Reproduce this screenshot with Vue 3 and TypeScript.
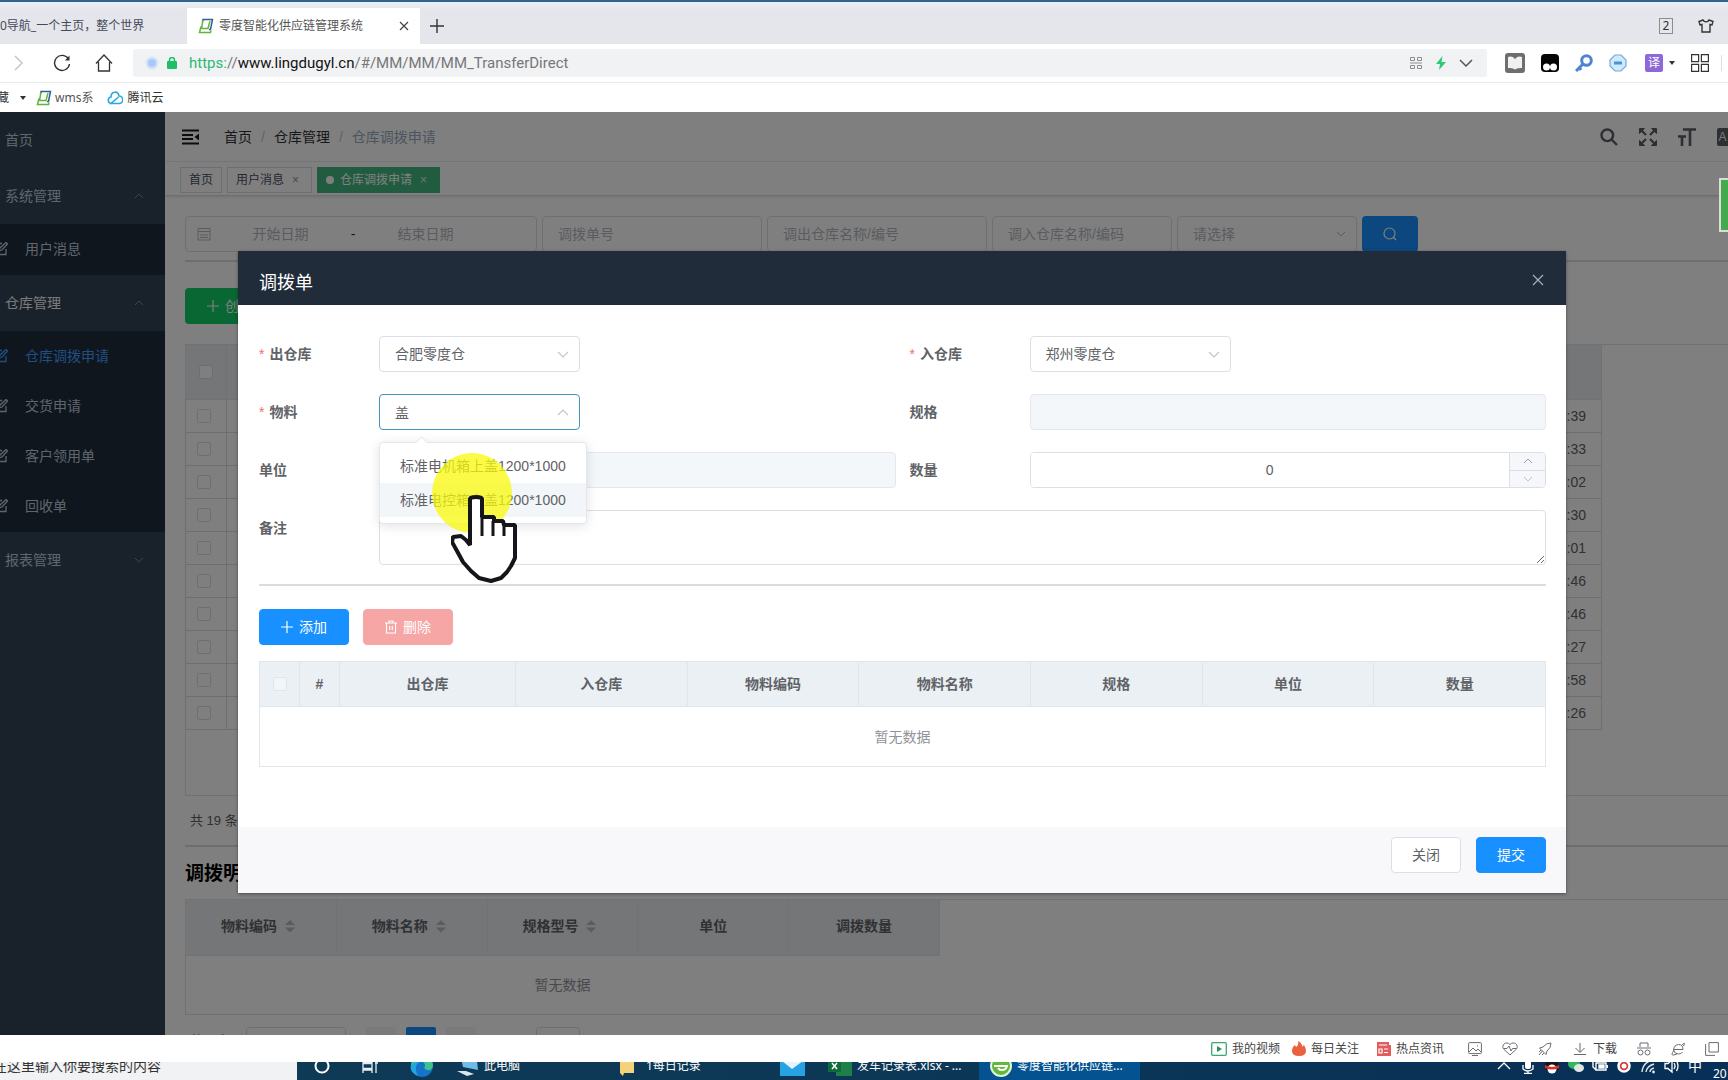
<script setup lang="ts">
import { ref } from 'vue'

interface MenuGroup {
  title: string
  open: boolean
  bright?: boolean
  children: string[]
}

const menu: MenuGroup[] = [
  { title: '系统管理', open: true, children: ['用户消息'] },
  { title: '仓库管理', open: true, bright: true, children: ['仓库调拨申请', '交货申请', '客户领用单', '回收单'] },
  { title: '报表管理', open: false, children: [] },
]
const current = '仓库调拨申请'
const times = [':39', ':33', ':02', ':30', ':01', ':46', ':46', ':27', ':58', ':26']
const detailColumns = [
  { name: '物料编码', sortable: true },
  { name: '物料名称', sortable: true },
  { name: '规格型号', sortable: true },
  { name: '单位', sortable: false },
  { name: '调拨数量', sortable: false },
]
const itemColumns = ['出仓库', '入仓库', '物料编码', '物料名称', '规格', '单位', '数量']
const materials = ['标准电机箱上盖1200*1000', '标准电控箱上盖1200*1000']
const hovered = 1

const material = ref('盖')
const quantity = ref('0')
const remark = ref('')
</script>

<template>
  <div class="screen">
    <header class="browser">
      <div class="tabstrip">
        <a class="tab" href="#">0导航_一个主页，整个世界</a>
        <div class="tab on">
          <svg class="logo" viewBox="0 0 16 16"><path d="M4.500 3.500L5 1.500h9.500l-2 10H11" fill="none" stroke="#2d5f9a" stroke-width="1.500"/><path d="M5 2L3.500 10.500h6.500L12 3M3 8.500L1.500 14.500h11l.500-2" fill="none" stroke="#62b53c" stroke-width="1.500"/></svg>
          <span class="tab-name">零度智能化供应链管理系统</span>
          <button class="plain" aria-label="关闭标签"><svg width="10" height="10" viewBox="0 0 10 10"><path d="M1 1l8 8M9 1L1 9" stroke="#444" stroke-width="1.200"/></svg></button>
        </div>
        <button class="plain plus" aria-label="新标签"><svg width="14" height="14" viewBox="0 0 14 14"><path d="M7 0v14M0 7h14" stroke="#333" stroke-width="1.400"/></svg></button>
        <span class="count">2</span>
        <svg class="shirt" viewBox="0 0 16 14"><path d="M5 1L1 2.500 2 6l2-.500V13h8V5.500l2 .500 1-3.500L11 1C10 3.500 6 3.500 5 1z" fill="none" stroke="#333" stroke-width="1.400"/></svg>
      </div>

      <div class="toolbar">
        <button class="plain" aria-label="前进"><svg width="10" height="16" viewBox="0 0 10 16"><path d="M1 1l7 7-7 7" fill="none" stroke="#c4c6ca" stroke-width="1.500"/></svg></button>
        <button class="plain reload" aria-label="刷新"><svg width="18" height="18" viewBox="0 0 18 18"><path d="M15.500 5A7.500 7.500 0 1 0 16.500 10" fill="none" stroke="#333" stroke-width="1.400"/><path d="M16.500 1.500v5H12z" fill="#333"/></svg></button>
        <button class="plain home" aria-label="主页"><svg width="18" height="18" viewBox="0 0 18 18"><path d="M1 9.500L9 1l8 8.500M3.500 8v9h11V8" fill="none" stroke="#333" stroke-width="1.300"/></svg></button>
        <div class="address">
          <svg width="14" height="14" viewBox="0 0 14 14"><circle cx="7" cy="7" r="6.500" fill="#d5e3f8"/><circle cx="7" cy="7" r="4" fill="#a9c8f5"/></svg>
          <svg class="lock" width="10" height="12" viewBox="0 0 10 12"><rect y="4" width="10" height="8" rx="1" fill="#1fbf65"/><path d="M2.500 5V3a2.500 2.500 0 0 1 5 0v2" fill="none" stroke="#1fbf65" stroke-width="1.500"/></svg>
          <span class="url"><i>https:</i>//<b>www.lingdugyl.cn</b>/#/MM/MM/MM_TransferDirect</span>
          <svg width="12" height="12" viewBox="0 0 12 12" fill="none" stroke="#8b8e93"><path d="M.500.500h4v3h-4zM7.500.500h4v3h-4zM.500 8.500h4v3h-4zM7.500 8.500h4v3h-4zM0 6h12"/></svg>
          <svg class="bolt" width="10" height="14" viewBox="0 0 10 14"><path d="M6.500 0L0 8h4l-1 6 7-8H5.500z" fill="#2fc878"/></svg>
          <svg width="14" height="8" viewBox="0 0 14 8"><path d="M1 1l6 6 6-6" fill="none" stroke="#555" stroke-width="1.500"/></svg>
        </div>
        <div class="exts">
          <svg width="20" height="20" viewBox="0 0 20 20"><rect width="20" height="20" rx="3" fill="#6d6e70"/><path d="M3 4q4-1.500 7 2 3-3.500 7-2v11q-5-.500-7 1.500-2-2-7-1.500z" fill="#f1f1f1"/></svg>
          <svg width="18" height="18" viewBox="0 0 18 18"><rect width="18" height="18" rx="4" fill="#050505"/><circle cx="5.500" cy="13" r="3.500" fill="#fff"/><circle cx="12.500" cy="13" r="3.500" fill="#fff"/></svg>
          <svg width="18" height="18" viewBox="0 0 18 18" fill="none" stroke="#5084d0" stroke-width="3"><circle cx="11.500" cy="6.500" r="4.800"/><path d="M8 10l-7 7M4 13l2 3"/></svg>
          <svg width="18" height="18" viewBox="0 0 18 18"><path d="M6 1h6l5 5v6l-5 5H6l-5-5V6z" fill="#cfeaff" stroke="#74a9d8" stroke-width="1.200"/><path d="M5 9h8" stroke="#4b93d4" stroke-width="3"/></svg>
          <span class="translate">译</span>
          <span class="caret"></span>
          <svg width="18" height="18" viewBox="0 0 18 18" fill="none" stroke="#333" stroke-width="1.200"><path d="M.600.600h7v7h-7zM10.400.600h7v7h-7zM.600 10.400h7v7h-7zM10.400 10.400h7v7h-7z"/></svg>
          <span class="sep"></span>
        </div>
      </div>

      <nav class="bookmarks">
        <a class="fav" href="#">藏</a>
        <span class="caret"></span>
        <svg class="logo" viewBox="0 0 16 16"><path d="M4.500 3.500L5 1.500h9.500l-2 10H11" fill="none" stroke="#2d5f9a" stroke-width="1.500"/><path d="M5 2L3.500 10.500h6.500L12 3M3 8.500L1.500 14.500h11l.500-2" fill="none" stroke="#62b53c" stroke-width="1.500"/></svg>
        <a class="wms" href="#">wms系</a>
        <svg class="cloud" width="16" height="14" viewBox="0 0 16 14" fill="none" stroke="#29a9e1" stroke-width="1.600"><path d="M4 12.500a3.300 3.300 0 0 1 0-6.500C4 0 11.500-.500 12 5a3.700 3.700 0 0 1 0 7.500H4L11.500 6"/></svg>
        <a href="#">腾讯云</a>
      </nav>
    </header>

    <div class="page">
      <aside class="side">
        <a class="menu-top" href="#">首页</a>
        <template v-for="g in menu" :key="g.title">
          <a class="menu-top" :class="{ bright: g.bright }" href="#">
            <span>{{ g.title }}</span>
            <svg width="10" height="6" viewBox="0 0 10 6"><path :d="g.open ? 'M1 5l4-4 4 4' : 'M1 1l4 4 4-4'" fill="none" stroke="#808a96"/></svg>
          </a>
          <div v-if="g.children.length" class="submenu">
            <a v-for="c in g.children" :key="c" class="menu-sub" :class="{ active: c === current }" href="#">
              <svg width="14" height="14" viewBox="0 0 14 14" fill="none" stroke="currentColor" stroke-width="1.300"><path d="M8 1.500H1v11h11V7M5 9l1-3 6-5.500L13.500 2 8 8z"/></svg>
              <span>{{ c }}</span>
            </a>
          </div>
        </template>
      </aside>

      <main class="main">
        <div class="navbar">
          <svg width="17" height="16" viewBox="0 0 17 16"><path d="M0 1.500h17M0 6h11M0 10h11M0 14.500h17" stroke="#1a1a1a" stroke-width="2"/><path d="M17 4.500v7L12.500 8z" fill="#1a1a1a"/></svg>
          <nav class="crumbs"><a href="#">首页</a><i>/</i><a href="#">仓库管理</a><i>/</i><span>仓库调拨申请</span></nav>
          <div class="tools">
            <svg width="18" height="18" viewBox="0 0 18 18" fill="none" stroke="#5a5e66" stroke-width="2.400"><circle cx="7.300" cy="7.300" r="5.800"/><path d="M11.500 11.500L17 17"/></svg>
            <svg width="18" height="18" viewBox="0 0 18 18" fill="#5a5e66" stroke="#5a5e66" stroke-width="2.200"><path d="M.500.500h5l-5 5zM17.500.500h-5l5 5zM.500 17.500h5l-5-5zM17.500 17.500h-5l5-5z" stroke-width="1"/><path d="M2 2l5 5M16 2l-5 5M2 16l5-5M16 16l-5-5"/></svg>
            <svg width="18" height="18" viewBox="0 0 18 18" fill="none" stroke="#5a5e66" stroke-width="2.600"><path d="M5 1.500h13M12 1.500V18M0 8.500h8M4 8.500V18"/></svg>
            <span class="lang">A</span>
          </div>
        </div>

        <div class="tags">
          <a class="tag" href="#">首页</a>
          <a class="tag" href="#">用户消息<i>×</i></a>
          <a class="tag on" href="#"><b></b>仓库调拨申请<i>×</i></a>
        </div>

        <div class="content">
          <form class="filters" @submit.prevent>
            <div class="daterange">
              <svg width="14" height="14" viewBox="0 0 14 14" fill="none" stroke="#b4b8c0"><path d="M1 1.500h12v11.500H1zM1 4.500h12M3 8h8M3 10.500h8"/></svg>
              <input aria-label="开始日期" placeholder="开始日期" />
              <span>-</span>
              <input aria-label="结束日期" placeholder="结束日期" />
            </div>
            <input class="field w220" aria-label="调拨单号" placeholder="调拨单号" />
            <input class="field w220" aria-label="调出仓库" placeholder="调出仓库名称/编号" />
            <input class="field w180" aria-label="调入仓库" placeholder="调入仓库名称/编码" />
            <div class="pick w180">
              <select class="field muted" aria-label="状态"><option>请选择</option></select>
              <svg width="10" height="6" viewBox="0 0 10 6"><path d="M1 1l4 4 4-4" fill="none" stroke="#b0b4bc"/></svg>
            </div>
            <button class="search" aria-label="查询"><svg width="14" height="14" viewBox="0 0 14 14" fill="none" stroke="#fff" stroke-width="1.200"><circle cx="6.500" cy="6.500" r="5.500"/><path d="M10 10l3 3"/></svg></button>
          </form>
          <hr />
          <button class="create"><svg width="12" height="12" viewBox="0 0 12 12"><path d="M6 0v12M0 6h12" stroke="#fff" stroke-width="1.200"/></svg>创建</button>

          <div class="list">
            <table>
              <thead><tr><th class="check"><input type="checkbox" aria-label="全选" /></th><th></th></tr></thead>
              <tbody>
                <tr v-for="(t, i) in times" :key="i">
                  <td class="check"><input type="checkbox" :aria-label="'选择第' + (i + 1) + '行'" /></td>
                  <td class="time">{{ t }}</td>
                </tr>
              </tbody>
            </table>
          </div>
          <div class="total">共 19 条</div>
          <hr class="flush" />
          <h3>调拨明细</h3>
          <div class="detail">
            <table>
              <thead>
                <tr>
                  <th v-for="c in detailColumns" :key="c.name" :class="{ sortable: c.sortable }">{{ c.name }}<svg v-if="c.sortable" width="10" height="14" viewBox="0 0 10 14" fill="#b4b8c0"><path d="M0 6l5-5 5 5zM0 8.500h10l-5 5z"/></svg></th>
                </tr>
              </thead>
              <tbody><tr><td colspan="5">暂无数据</td></tr></tbody>
            </table>
          </div>
          <div class="pager">
            <span class="zero">共 0 条</span>
            <span class="size"></span>
            <button class="pg" aria-label="上一页"></button>
            <button class="pg now" aria-label="第一页"></button>
            <button class="pg" aria-label="下一页"></button>
            <input class="jump" aria-label="页码" />
          </div>
        </div>
      </main>

      <div class="mask">
        <section class="dialog" role="dialog" aria-labelledby="dlg-title">
          <header class="dlg-head">
            <h2 id="dlg-title">调拨单</h2>
            <button class="plain" aria-label="关闭对话框"><svg width="12" height="12" viewBox="0 0 12 12"><path d="M1 1l10 10M11 1L1 11" stroke="#a9b0ba" stroke-width="1.200"/></svg></button>
          </header>
          <div class="dlg-body">
            <form class="form" @submit.prevent>
              <div class="item">
                <label for="out"><em>*</em>出仓库</label>
                <div class="pick w201">
                  <select id="out" class="field"><option>合肥零度仓</option></select>
                  <svg width="12" height="7" viewBox="0 0 12 7"><path d="M1 1l5 5 5-5" fill="none" stroke="#c0c4cc" stroke-width="1.200"/></svg>
                </div>
              </div>
              <div class="item">
                <label for="in"><em>*</em>入仓库</label>
                <div class="pick w201">
                  <select id="in" class="field"><option>郑州零度仓</option></select>
                  <svg width="12" height="7" viewBox="0 0 12 7"><path d="M1 1l5 5 5-5" fill="none" stroke="#c0c4cc" stroke-width="1.200"/></svg>
                </div>
              </div>
              <div class="item">
                <label for="mat"><em>*</em>物料</label>
                <div class="pick w201">
                  <input id="mat" v-model="material" class="field focus" role="combobox" aria-expanded="true" aria-controls="mat-list" />
                  <svg width="12" height="7" viewBox="0 0 12 7"><path d="M1 6l5-5 5 5" fill="none" stroke="#c0c4cc" stroke-width="1.200"/></svg>
                  <ul id="mat-list" class="options" role="listbox">
                    <li v-for="(m, i) in materials" :key="m" role="option" :class="{ hover: i === hovered }">{{ m }}</li>
                  </ul>
                  <div class="halo"></div>
                  <svg class="hand" viewBox="0 0 66 88"><path d="M19 50V4q0-2 6-2t6 2v18h12v4h9l1 4h11v33l-4 8-4 6-6 6-10 3-12-3-8-7-8-9-6-11-5-9 1-5 8-1 5 4z" fill="#fff" stroke="#15161a" stroke-width="4" stroke-linejoin="bevel"/><path d="M31 22v19M42 26v15M53 30v11" stroke="#15161a" stroke-width="3"/></svg>
                </div>
              </div>
              <div class="item">
                <label for="spec">规格</label>
                <input id="spec" class="field off" disabled />
              </div>
              <div class="item">
                <label for="unit">单位</label>
                <input id="unit" class="field off" disabled />
              </div>
              <div class="item">
                <label for="qty">数量</label>
                <div class="number">
                  <input id="qty" v-model="quantity" inputmode="numeric" />
                  <div class="steps">
                    <button aria-label="增加"><svg width="10" height="6" viewBox="0 0 10 6"><path d="M1 5l4-4 4 4" fill="none" stroke="#9a9ea6"/></svg></button>
                    <button aria-label="减少"><svg width="10" height="6" viewBox="0 0 10 6"><path d="M1 1l4 4 4-4" fill="none" stroke="#c0c4cc"/></svg></button>
                  </div>
                </div>
              </div>
              <div class="item wide">
                <label for="remark">备注</label>
                <textarea id="remark" v-model="remark"></textarea>
              </div>
            </form>
            <hr class="flush" />
            <div class="actions">
              <button class="btn primary"><svg width="12" height="12" viewBox="0 0 12 12"><path d="M6 0v12M0 6h12" stroke="#fff" stroke-width="1.200"/></svg>添加</button>
              <button class="btn danger"><svg width="12" height="14" viewBox="0 0 12 14" fill="none" stroke="#fff" stroke-width="1.100"><path d="M0 3h12M1.500 3v10h9V3M4 3V1h4v2M4.700 6v4M7.300 6v4"/></svg>删除</button>
            </div>
            <table class="items">
              <colgroup><col class="c40" /><col class="c40" /><col class="c176" /><col v-for="n in 6" :key="n" /></colgroup>
              <thead>
                <tr>
                  <th><input type="checkbox" aria-label="全选物料" /></th>
                  <th>#</th>
                  <th v-for="c in itemColumns" :key="c">{{ c }}</th>
                </tr>
              </thead>
              <tbody><tr><td colspan="9">暂无数据</td></tr></tbody>
            </table>
          </div>
          <footer class="dlg-foot">
            <button class="btn">关闭</button>
            <button class="btn primary">提交</button>
          </footer>
        </section>
      </div>
      <div class="float"></div>
    </div>

    <footer class="status">
      <a href="#"><svg width="16" height="14" viewBox="0 0 16 14"><rect x=".700" y=".700" width="14.600" height="12.600" rx="1" fill="none" stroke="#37a873" stroke-width="1.300"/><path d="M6 4v6l5-3z" fill="#26935e"/></svg>我的视频</a>
      <a href="#"><svg width="14" height="15" viewBox="0 0 14 15"><path d="M6 0q5 3 4 6l2-2q2 3 2 6 0 5-7 5t-7-5q0-4 3-6l1 2Q7 4 6 0z" fill="#e8623d"/></svg>每日关注</a>
      <a href="#"><svg width="14" height="14" viewBox="0 0 14 14"><path d="M0 0h12v3h2v11H0z" fill="#e35c5c"/><path d="M2 3h8M2 7h3v4H2zM7 7h4M7 10.500h4" fill="none" stroke="#fff" stroke-width="1.200"/></svg>热点资讯</a>
      <div class="status-icons">
        <svg width="14" height="14" viewBox="0 0 14 14"><rect x=".600" y=".600" width="12.800" height="11" rx="1"/><path d="M1 10l4-4 3 3 2-2 3 3M4 13.500h6M9.500 3.500v1"/></svg>
        <svg width="16" height="14" viewBox="0 0 16 14"><path d="M8 13L1.500 7C-1 3 4-1.500 8 2.500 12-1.500 17 3 14.500 7zM2 6.500h3l2-2.500 2 5 1.500-2.500H14"/></svg>
        <svg width="14" height="14" viewBox="0 0 14 14"><path d="M13 1Q8 1 5 5L1.500 6 8 12.500 9 9q4-3 4-8zM4.500 9L1 13M3 8l-2 2M6 11l-2 2"/></svg>
      </div>
      <a class="download" href="#"><svg width="12" height="12" viewBox="0 0 12 12" fill="none" stroke="#666"><path d="M6 0v9M1.500 5L6 9.500 10.500 5M0 11.500h12"/></svg>下载</a>
      <div class="status-icons last">
        <svg width="14" height="14" viewBox="0 0 14 14"><path d="M3 5V1h8v4M0 6h14"/><circle cx="3.500" cy="10.500" r="2.500"/><circle cx="10.500" cy="10.500" r="2.500"/></svg>
        <svg width="14" height="14" viewBox="0 0 14 14"><path d="M2.500 7.500H12Q12 2.500 7.500 2.500 3 3 2.500 8q1 4 5 4 3 0 4-2M11 3Q15-1 12.500 4M3 8Q-1 14 3 13l3-1"/></svg>
        <svg width="14" height="14" viewBox="0 0 14 14"><path d="M4 .600h9.400V10H4zM.600 2v11.400H10"/></svg>
      </div>
    </footer>

    <div class="taskbar">
      <div class="strip">
        <div class="ask"><span>在这里输入你要搜索的内容</span></div>
        <svg class="cortana" width="16" height="16" viewBox="0 0 16 16"><circle cx="8" cy="8" r="6.500" fill="none" stroke="#fff" stroke-width="2"/></svg>
        <svg class="view" width="16" height="14" viewBox="0 0 16 14" fill="none" stroke="#e6eef4" stroke-width="1.300"><path d="M1 0v3h9V0M1 14v-3h9v3M1 4.500h9v5H1zM14 0v14M13 4h3"/></svg>
        <svg class="edge" width="24" height="24" viewBox="0 0 24 24"><circle cx="12" cy="12" r="11" fill="#1673c9"/><path d="M12 1a11 11 0 0 1 11 11q-1 5-6 4-4-1-2-4 0-5-6-4-5 1-8 5Q1 1 12 1z" fill="#3fc38e"/><path d="M9 8q-6 5-1 14Q-1 18 1 12q3-5 8-4z" fill="#1fa8e0"/></svg>
        <span class="task t1"><svg width="22" height="20" viewBox="0 0 22 20"><path d="M4 2l16 3 1 9-15-3z" fill="#6fbce8"/><path d="M0 15l9 0 8 3-7 2z" fill="#dce6ee"/></svg>此电脑</span>
        <span class="task t2"><svg width="14" height="20" viewBox="0 0 14 20"><path d="M0 2h9l5 3v12H4l-1 3-3-3z" fill="#f5d27a"/></svg>1每日记录</span>
        <svg class="mail" width="25" height="20" viewBox="0 0 25 20"><path d="M0 0h25v20H0z" fill="#27a3e4"/><path d="M2 5h21L12 13z" fill="#e4f4fd"/></svg>
        <span class="task t3"><svg width="24" height="20" viewBox="0 0 24 20"><path d="M8 0h16v20H8z" fill="#1f7f49"/><path d="M0 4h13v12H0z" fill="#0f6b39"/><path d="M4 7l5 6M9 7l-5 6" stroke="#fff" stroke-width="1.500"/></svg>发车记录表.xlsx - ...</span>
        <span class="task t4"><svg width="22" height="22" viewBox="0 0 22 22"><circle cx="11" cy="11" r="10" fill="#5fba3c" stroke="#e6f3d8" stroke-width="2"/><path d="M4 11h13q-1 4-5 4-3 0-4-2" fill="none" stroke="#fff" stroke-width="2"/></svg>零度智能化供应链...</span>
        <div class="tray">
          <svg viewBox="0 0 16 16" fill="none" stroke="#fff" stroke-width="1.300"><path d="M2 11l6-6 6 6"/></svg>
          <svg viewBox="0 0 16 16"><rect x="5" y="0" width="6" height="11" rx="2" fill="#fff"/><path d="M3 7v4q5 4 10 0V7M8 13v3M4 15.500h8" fill="none" stroke="#fff" stroke-width="1.300"/></svg>
          <svg viewBox="0 0 16 16"><ellipse cx="8" cy="8" rx="7" ry="7" fill="#161616"/><ellipse cx="8" cy="11" rx="4.500" ry="4.500" fill="#fff"/><path d="M1 7q7 4 14 0v3q-7 3-14 0z" fill="#d92f2f"/></svg>
          <svg viewBox="0 0 16 16"><ellipse cx="6" cy="6" rx="6" ry="5" fill="#2fb85c"/><ellipse cx="11" cy="10" rx="5" ry="4" fill="#e1e7e5"/></svg>
          <svg viewBox="0 0 16 16" fill="none" stroke="#fff" stroke-width="1.400"><path d="M4 5h10v7H4zM15.500 7v3M1 3v6l3 3"/><path d="M7 7h5v3H7z" fill="#fff"/></svg>
          <svg viewBox="0 0 16 16"><circle cx="8" cy="8" r="5.500" fill="#d63a3a" stroke="#fff" stroke-width="2.500"/><circle cx="8" cy="8" r="2.500" fill="#fff"/></svg>
          <svg viewBox="0 0 16 16" fill="none" stroke="#dce6ee" stroke-width="1.400"><path d="M2 14Q3 4 13 2M6 14q1-6 8-8M10 14q0-3 4-4"/><circle cx="13.500" cy="14" r=".700"/></svg>
          <svg viewBox="0 0 16 16" fill="none" stroke="#fff" stroke-width="1.300"><path d="M1 5.500h3L8 2v12L4 10.500H1zM10 5q2 3 0 6M12.500 3q3 5 0 10"/></svg>
          <span>中</span>
        </div>
        <span class="clock">20</span>
      </div>
    </div>
  </div>
</template>

<style>
body {
  margin: 0;
  overflow: hidden;
}
</style>

<style scoped>
.screen {
  display: flex;
  flex-direction: column;
  height: 100vh;
  overflow: hidden;
  font: 14px/20px 'Liberation Sans', 'Noto Sans CJK SC', sans-serif;
  color: #606266;
}
.screen * { box-sizing: border-box; }
svg { display: block; flex: none; }
a { color: inherit; text-decoration: none; white-space: nowrap; }
button, input, select, textarea { font: inherit; color: inherit; margin: 0; outline: none; }
i, em { font-style: normal; }
.plain { display: flex; padding: 0; border: 0; background: none; }

/* browser */
.browser { flex: none; background: #fff; font: 12px/18px 'Noto Sans', 'Noto Sans CJK SC', sans-serif; color: #333; }
.tabstrip {
  display: flex;
  align-items: center;
  height: 44px;
  padding-top: 6px;
  border-top: 2px solid #33628a;
  background: linear-gradient(#e9f1f8, #e4e6eb 8px);
}
.tab { width: 187px; color: #44495a; }
.tab.on { display: flex; align-items: center; width: 233px; height: 36px; padding: 0 11px; background: #fff; color: #555; }
.logo { width: 16px; height: 16px; }
.tab-name { flex: 1; padding-left: 5px; }
.plus { margin-left: 10px; }
.count { margin-left: auto; width: 14px; height: 16px; border: 1px solid #8a8d92; line-height: 14px; text-align: center; }
.shirt { width: 16px; height: 14px; margin: 0 14px 0 25px; }
.toolbar { display: flex; align-items: center; height: 39px; padding-left: 14px; border-bottom: 1px solid #e9eaec; }
.reload { margin-left: 29px; }
.home { margin-left: 24px; }
.address { display: flex; flex: 1; align-items: center; height: 28px; margin-left: 20px; padding: 0 14px 0 12px; border-radius: 3px; background: #f0f2f4; }
.lock { margin: 0 12px 0 8px; }
.url { flex: 1; font-family: Roboto, sans-serif; font-size: 15px; line-height: 22px; color: #777; }
.url i { color: #2eb872; }
.url b { font-weight: 400; color: #111; }
.bolt { margin: 0 13px 0 14px; }
.exts { display: flex; align-items: center; gap: 16px; padding: 0 4px 0 18px; }
.translate { width: 18px; height: 18px; margin-left: 2px; border-radius: 2px; background: #8d68d8; color: #fff; text-align: center; }
.caret { width: 0; height: 0; border: 3px solid transparent; border-top: 4px solid #333; border-bottom: 0; }
.exts .caret { margin-left: -10px; }
.sep { width: 1px; height: 16px; background: #ddd; margin: 0 2px 0 -4px; }
.bookmarks { display: flex; align-items: center; height: 29px; }
.fav { margin: 0 11px 0 -3px; }
.bookmarks .logo { margin: 0 3px 0 10px; }
.wms { color: #555; }
.cloud { margin: 0 4px 0 14px; }

/* app shell */
.page { position: relative; display: flex; flex: 1; min-height: 0; overflow: hidden; background: #fff; }
.side { width: 165px; flex: none; background: #324456; color: #bfcbd9; }
.menu-top { display: flex; align-items: center; justify-content: space-between; height: 56px; padding: 0 21px 0 5px; }
.menu-top.bright { color: #f4f4f5; }
.submenu { padding-bottom: 1px; background: #1f2d3d; }
.menu-sub { display: flex; align-items: center; height: 50px; }
.submenu .menu-sub svg { margin: 0 17px 0 -6px; }
.menu-sub.active { color: #409eff; }
.main { flex: 1; min-width: 0; }
.navbar { display: flex; align-items: center; height: 50px; padding-left: 17px; border-bottom: 1px solid #eceef2; }
.crumbs { display: flex; flex: 1; margin-left: 25px; color: #97a8be; }
.crumbs a { color: #303133; }
.crumbs i { margin: 0 9px; color: #c0c4cc; }
.tools { display: flex; align-items: center; gap: 21px; }
.lang { width: 11px; height: 18px; border-radius: 2px 0 0 2px; background: #5a5e66; color: #eee; font-size: 12px; line-height: 18px; text-align: center; }
.tags { display: flex; align-items: center; gap: 5px; height: 34px; padding: 2px 0 0 15px; border-bottom: 1px solid #d8dce5; box-shadow: 0 1px 3px rgba(0, 0, 0, .12); }
.tag { display: flex; align-items: center; height: 26px; padding: 0 8px; border: 1px solid #d8dce5; font-size: 12px; color: #495060; }
.tag i { width: 15px; margin-left: 4px; color: #909399; text-align: center; }
.tag.on { border-color: #42b983; background: #42b983; color: #fff; }
.tag.on i { color: #d5efe2; }
.tag b { width: 8px; height: 8px; margin-right: 6px; border-radius: 50%; background: #fff; }
.content { padding: 20px 0 0 20px; }

/* fields */
.field { width: 100%; height: 36px; padding: 0 15px; border: 1px solid #dcdfe6; border-radius: 4px; background: #fff; appearance: none; }
.muted, input::placeholder { color: #b4b7be; }
input::placeholder { opacity: 1; }
.pick { position: relative; display: flex; }
.pick > svg:not(.hand) { position: absolute; right: 11px; top: 15px; pointer-events: none; }
.w180 { width: 180px; }
.w220 { width: 220px; }
.w201 { width: 201px; }
.field.focus { border-color: #4296c0; }
.field.off { border-color: #e4e7ed; background: #f4f7fa; }
hr { height: 2px; margin: 8px 0 26px; border: 0; background: #dcdcdc; }
hr.flush { margin: 0; }
.filters { display: flex; gap: 5px; }
.daterange { display: flex; align-items: center; width: 352px; height: 36px; padding: 0 11px; border: 1px solid #dcdfe6; border-radius: 4px; }
.daterange svg { margin-right: 4px; }
.daterange input { width: 131px; padding: 0; border: 0; background: none; text-align: center; }
.daterange span { width: 14px; text-align: center; color: #303133; }
.search { display: flex; align-items: center; justify-content: center; width: 56px; height: 36px; padding: 0; border: 0; border-radius: 4px; background: #1890ff; }
.create { display: flex; align-items: center; gap: 6px; height: 36px; margin-bottom: 20px; padding: 0 22px; border: 0; border-radius: 4px; background: #13ce66; color: #fff; }

/* tables */
table { border-collapse: collapse; table-layout: fixed; }
th, td { padding: 0; border: 1px solid #e1e6ed; text-align: center; font-weight: 400; }
th { background: #ebf0f5; font-weight: 700; }
input[type='checkbox'] { display: block; width: 14px; height: 14px; margin: 0 auto; border: 1px solid #dcdfe6; border-radius: 2px; background: #fff; appearance: none; }
.list { height: 452px; border: 1px solid #dfe4ea; border-right: 0; }
.list table { width: 1417px; margin: -1px 0 0 -1px; }
.list th { height: 55px; }
.list td { height: 33px; border-color: #d9dde4; }
.list .check { width: 41px; }
.list td.check { padding-right: 4px; }
.list td.time { padding-right: 15px; text-align: right; }
.total { height: 49px; padding-left: 5px; font-size: 13px; line-height: 50px; }
h3 { height: 52px; margin: 0; font-size: 19px; line-height: 54px; color: #000; }
.detail { border: 1px solid #dfe4ea; border-right: 0; height: 116px; }
.detail table { width: 755px; margin: -1px 0 0 -1px; }
.detail th { height: 56px; padding-bottom: 4px; }
.detail th.sortable { padding-right: 6px; }
.detail th svg { display: inline-block; margin-left: 8px; vertical-align: -2px; }
.detail td { height: 59px; border: 0; color: #909399; }
.list th, .detail th { background: #e9edf1; }
.pager { display: flex; gap: 10px; margin-top: 12px; padding-left: 5px; font-size: 13px; line-height: 28px; }
.zero { width: 46px; }
.size { width: 100px; height: 28px; margin-right: 10px; border: 1px solid #dcdfe6; border-radius: 3px; }
.pg { width: 30px; height: 28px; padding: 0; border: 0; border-radius: 2px; background: #f4f4f5; }
.pg.now { background: #1890ff; }
.jump { width: 44px; height: 28px; margin-left: 50px; border: 1px solid #dcdfe6; border-radius: 3px; }

/* dialog */
.mask { position: absolute; inset: 0; padding: 139px 162px 0 238px; background: rgba(0, 0, 0, .5); }
.dialog { background: #fff; box-shadow: 0 1px 3px rgba(0, 0, 0, .4); }
.dlg-head { display: flex; align-items: center; justify-content: space-between; height: 54px; padding: 4px 22px 0 21px; background: #212c3b; }
h2 { margin: 0; padding-top: 6px; font-size: 18px; font-weight: 400; line-height: 24px; color: #fff; }
.dlg-body { height: 522px; padding: 31px 20px 0 21px; }
.form { display: grid; grid-template-columns: 1fr 1fr; gap: 22px 14px; margin-bottom: 19px; }
.item { display: flex; min-width: 0; }
.item.wide { grid-column: 1 / -1; }
label { flex: none; width: 120px; font-weight: 700; line-height: 36px; }
label em { margin-right: 5px; font-weight: 400; color: #f56c6c; }
.item > .field { flex: 1; width: auto; min-width: 0; }
textarea { flex: 1; height: 55px; padding: 5px 15px; border: 1px solid #dcdfe6; border-radius: 4px; background: #fff; resize: vertical; }
.number { display: flex; flex: 1; height: 36px; border: 1px solid #dcdfe6; border-radius: 4px; overflow: hidden; }
.number input { flex: 1; min-width: 0; padding: 0; border: 0; text-align: center; }
.steps { display: flex; flex-direction: column; width: 36px; border-left: 1px solid #dcdfe6; }
.steps button { display: flex; flex: 1; align-items: center; justify-content: center; padding: 0; border: 0; background: #f5f7fa; }
.steps button + button { border-top: 1px solid #dcdfe6; }
.options { position: absolute; z-index: 2; left: 0; top: 48px; width: 208px; margin: 0; padding: 6px 0; border: 1px solid #e4e7ed; border-radius: 4px; background: #fff; box-shadow: 0 2px 12px rgba(0, 0, 0, .12); list-style: none; }
.options::before { content: ''; position: absolute; left: 37px; top: -5px; width: 8px; height: 8px; border: solid #e4e7ed; border-width: 1px 0 0 1px; background: #fff; transform: rotate(45deg); }
.options li { height: 34px; padding: 0 20px; line-height: 34px; white-space: nowrap; }
.options li.hover { background: #f3f6f9; }
.halo { position: absolute; z-index: 3; left: 53px; top: 59px; width: 80px; height: 80px; border-radius: 50%; background: rgba(250, 250, 10, .75); }
.hand { position: absolute; z-index: 4; left: 72px; top: 101px; width: 66px; height: 88px; }
.actions { display: flex; gap: 14px; margin: 23px 0 16px; }
.btn { display: flex; align-items: center; justify-content: center; gap: 6px; width: 70px; height: 36px; padding: 0; border: 1px solid #dcdfe6; border-radius: 4px; background: #fff; }
.actions .btn { width: 90px; }
.btn.primary { border-color: #1890ff; background: #1890ff; color: #fff; }
.btn.danger { border-color: #f7a6a6; background: #f7a6a6; color: #fff; }
.items { width: 100%; }
.items th { height: 45px; }
.items td { height: 60px; color: #909399; }
.items th input { border-color: #dfe5ee; background: #f2f6fb; }
.c40 { width: 40px; }
.c176 { width: 176px; }
.dlg-foot { display: flex; justify-content: flex-end; gap: 15px; height: 66px; padding: 10px 20px; background: #f8f7fa; }
.float { position: absolute; right: 0; top: 66px; width: 9px; height: 54px; border: 2px solid #d8ddd8; border-right: 0; background: #45a94d; }

/* status bar and taskbar */
.status { position: relative; z-index: 1; display: flex; flex: none; align-items: center; justify-content: flex-end; height: 27px; padding-right: 9px; background: #fff; font-size: 12px; line-height: 18px; color: #444; }
.status a { display: flex; align-items: center; gap: 5px; margin-left: 12px; }
.status a + a + a { margin-left: 18px; }
.status-icons { display: flex; gap: 20px; margin-left: 24px; fill: none; stroke: #6a6d72; }
.status-icons.last { margin-left: 20px; }
.status a.download { margin-left: 22px; gap: 7px; }
.taskbar { flex: none; height: 18px; overflow: hidden; background: linear-gradient(90deg, #103c57, #0b3655 60%, #082f57); color: #fff; font: 12px/18px 'Noto Sans', 'Noto Sans CJK SC', sans-serif; }
.strip { display: flex; align-items: center; height: 48px; margin-top: -20px; white-space: nowrap; }
.ask { display: flex; align-items: center; width: 297px; height: 48px; background: #f0f2f4; color: #333; font-size: 14px; }
.ask span { margin-left: -7px; }
.cortana { margin-left: 17px; }
.view { margin-left: 32px; }
.edge { margin-left: 32px; }
.task { display: flex; align-items: center; gap: 5px; height: 48px; }
.t1 { width: 163px; margin-left: 23px; }
.t2 { width: 160px; gap: 12px; }
.mail { margin-right: 23px; }
.t3 { width: 151px; }
.t4 { width: 161px; padding-left: 11px; background: #04528f; }
.tray { display: flex; align-items: center; gap: 8px; margin-left: auto; font-size: 14px; }
.tray svg { width: 16px; height: 16px; }
.clock { width: 15px; margin-left: 11px; padding-top: 16px; }
</style>
